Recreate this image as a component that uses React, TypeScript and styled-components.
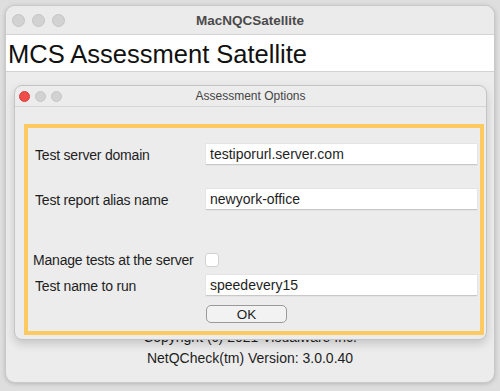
import React from 'react'
import styled, { createGlobalStyle } from 'styled-components'

const GlobalStyle = createGlobalStyle`
  html, body {
    margin: 0;
    padding: 0;
    background: #dedede;
  }
  body {
    font-family: 'Liberation Sans', Arial, sans-serif;
    color: #1e1e1e;
  }
`

export default function App() {
  return (
    <>
      <GlobalStyle />
      <Desktop>
        <Window>
          <TitleBar>
            <Lights>
              <Light />
              <Light />
              <Light />
            </Lights>
            <WindowTitle>MacNQCSatellite</WindowTitle>
          </TitleBar>

          <Banner>MCS Assessment Satellite</Banner>

          <WindowBody>
            <InfoLine>Copyright (c) 2021 Visualware Inc.</InfoLine>
            <InfoLine>NetQCheck(tm) Version: 3.0.0.40</InfoLine>
          </WindowBody>

          <Dialog>
            <DialogTitleBar>
              <Lights $small>
                <Light $small $close />
                <Light $small />
                <Light $small />
              </Lights>
              <DialogTitle>Assessment Options</DialogTitle>
            </DialogTitleBar>

            <DialogBody>
              <Frame>
                <Row $top={16}>
                  <Label>Test server domain</Label>
                  <Field defaultValue="testiporurl.server.com" />
                </Row>

                <Row $top={24}>
                  <Label>Test report alias name</Label>
                  <Field defaultValue="newyork-office" />
                </Row>

                <Row $top={42}>
                  <Label $indent={5}>Manage tests at the server</Label>
                  <Check type="checkbox" />
                </Row>

                <Row $top={7}>
                  <Label>Test name to run</Label>
                  <Field defaultValue="speedevery15" />
                </Row>

                <Row $top={9}>
                  <span />
                  <OkButton>OK</OkButton>
                </Row>
              </Frame>
            </DialogBody>
          </Dialog>
        </Window>
      </Desktop>
    </>
  )
}

const Desktop = styled.div`
  width: 500px;
  height: 391px;
  padding: 5px 5px 8px 5px;
  box-sizing: border-box;
  overflow: hidden;
`

const Window = styled.div`
  position: relative;
  display: flex;
  flex-direction: column;
  width: 490px;
  height: 378px;
  background: #ececec;
  border: 1px solid #c9c9c9;
  border-radius: 10px;
  box-sizing: border-box;
  box-shadow: 0 1px 4px rgba(0, 0, 0, 0.18);
  overflow: hidden;
`

const TitleBar = styled.div`
  position: relative;
  display: flex;
  align-items: center;
  justify-content: center;
  height: 28px;
  flex-shrink: 0;
  background: #ebebeb;
`

const Lights = styled.div<{ $small?: boolean }>`
  position: absolute;
  left: ${(p) => (p.$small ? '4px' : '6px')};
  top: 0;
  bottom: 0;
  display: flex;
  align-items: center;
  gap: ${(p) => (p.$small ? '5px' : '7px')};
`

const Light = styled.span<{ $small?: boolean; $close?: boolean }>`
  display: block;
  width: ${(p) => (p.$small ? '11px' : '13px')};
  height: ${(p) => (p.$small ? '11px' : '13px')};
  border-radius: 50%;
  background: ${(p) => (p.$close ? '#f14d49' : '#d2d2d2')};
  border: 0.5px solid ${(p) => (p.$close ? '#d8403c' : '#c4c4c4')};
  box-sizing: border-box;
`

const WindowTitle = styled.div`
  font-size: 13.5px;
  font-weight: bold;
  color: #4a4a4a;
`

const Banner = styled.div`
  height: 38px;
  flex-shrink: 0;
  display: flex;
  align-items: center;
  padding-left: 2px;
  padding-top: 2px;
  box-sizing: border-box;
  background: #fff;
  border-top: 1px solid #d3d3d3;
  border-bottom: 1px solid #d3d3d3;
  font-size: 25.5px;
  color: #111;
`

const WindowBody = styled.div`
  flex: 1;
  display: flex;
  flex-direction: column;
  align-items: center;
  justify-content: flex-end;
  gap: 5px;
  padding-bottom: 16px;
`

const InfoLine = styled.div`
  font-size: 14px;
  color: #1e1e1e;
`

const Dialog = styled.div`
  position: absolute;
  left: 8px;
  top: 79px;
  width: 473px;
  height: 255px;
  background: #ececec;
  border: 1px solid #c4c4c4;
  border-radius: 8px;
  box-sizing: border-box;
  box-shadow: 0 4px 10px rgba(0, 0, 0, 0.16);
  overflow: hidden;
`

const DialogTitleBar = styled.div`
  position: relative;
  display: flex;
  align-items: center;
  justify-content: center;
  height: 20px;
  border-bottom: 1px solid #d6d6d6;
`

const DialogTitle = styled.div`
  font-size: 12px;
  color: #444;
`

const DialogBody = styled.div`
  padding: 17px 2px 0 9px;
`

const Frame = styled.div`
  display: flex;
  flex-direction: column;
  border: 4px solid #fdca62;
  padding: 0 3px 8px 0;
`

const Row = styled.div<{ $top: number }>`
  display: grid;
  grid-template-columns: 178px 1fr;
  align-items: center;
  margin-top: ${(p) => p.$top}px;
`

const Label = styled.label<{ $indent?: number }>`
  padding-left: ${(p) => p.$indent ?? 7}px;
  font-size: 14px;
  letter-spacing: -0.2px;
  color: #1e1e1e;
  white-space: nowrap;
`

const Field = styled.input`
  height: 21px;
  box-sizing: border-box;
  border: none;
  border-bottom: 1px solid #c8c8c8;
  box-shadow: 0 0 0 0.5px #dcdcdc;
  background: #fff;
  padding: 0 4px;
  font-family: 'Liberation Sans', Arial, sans-serif;
  font-size: 14px;
  color: #1e1e1e;
  outline: none;
`

const Check = styled.input`
  appearance: none;
  margin: 0 0 0 -1px;
  width: 14px;
  height: 14px;
  background: #fff;
  border: 1px solid #d2d2d2;
  border-radius: 3px;
  box-sizing: border-box;
`

const OkButton = styled.button`
  width: 81px;
  height: 18px;
  padding: 0;
  box-sizing: border-box;
  background: #f2f2f2;
  border: 1px solid #9a9a9a;
  border-radius: 5px;
  font-family: 'Liberation Sans', Arial, sans-serif;
  font-size: 13.5px;
  color: #1e1e1e;
`
